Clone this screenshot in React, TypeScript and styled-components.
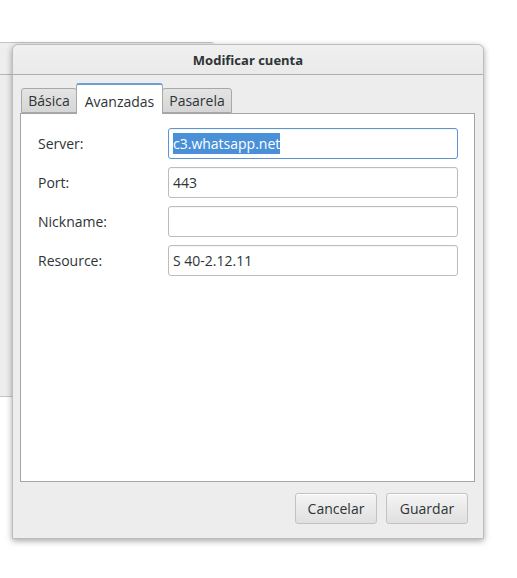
import React from "react";
import styled, { createGlobalStyle } from "styled-components";

const GlobalStyle = createGlobalStyle`
  html, body { margin: 0; padding: 0; background: #ffffff; }
  body { font-family: "Open Sans", "DejaVu Sans", sans-serif; font-size: 14px; color: #2e3436; }
  * { box-sizing: border-box; }
`;

const Desktop = styled.div`
  position: relative;
  width: 517px;
  height: 578px;
  overflow: hidden;
  background: #ffffff;
`;

const ParentWindow = styled.div`
  position: absolute;
  left: -4px;
  top: 42px;
  width: 220px;
  height: 355px;
  background: #ededed;
  border: 1px solid #c4c4c4;
  border-radius: 5px 5px 0 0;
  display: flex;
  flex-direction: column;
`;

const ParentTitle = styled.div`
  height: 32px;
  border-bottom: 1px solid #b6b6b6;
  background: #eeeeee;
`;

const Dialog = styled.div`
  position: absolute;
  left: 12px;
  top: 44px;
  width: 472px;
  height: 495px;
  background: #ededed;
  border: 1px solid #bdbdbd;
  border-radius: 6px 6px 0 0;
  box-shadow: 0 2px 6px rgba(0, 0, 0, 0.35);
  display: flex;
  flex-direction: column;
`;

const TitleBar = styled.div`
  height: 30px;
  flex: none;
  display: flex;
  align-items: center;
  justify-content: center;
  border-bottom: 1px solid #aeaeae;
  background: linear-gradient(#f0f0f0, #eaeaea);
  border-radius: 6px 6px 0 0;
  font-weight: 700;
  font-size: 13px;
  color: #2e3436;
`;

const Body = styled.div`
  flex: 1;
  display: flex;
  flex-direction: column;
  padding: 8px 8px 0 7px;
`;

const TabStrip = styled.div`
  display: flex;
  align-items: flex-end;
  padding-left: 1px;
  height: 30px;
  flex: none;
  position: relative;
  z-index: 1;
`;

const Tab = styled.div<{ $active?: boolean; $w: number }>`
  width: ${(p) => p.$w}px;
  height: ${(p) => (p.$active ? 31 : 25)}px;
  display: flex;
  align-items: center;
  justify-content: center;
  padding-top: ${(p) => (p.$active ? 3 : 0)}px;
  margin-bottom: ${(p) => (p.$active ? -1 : 0)}px;
  border: 1px solid #a8a8a8;
  border-bottom: ${(p) => (p.$active ? "none" : "1px solid #a8a8a8")};
  border-top: ${(p) => (p.$active ? "2px solid #6a9fd8" : "1px solid #a8a8a8")};
  border-radius: 3px 3px 0 0;
  background: ${(p) => (p.$active ? "#ffffff" : "linear-gradient(#e4e4e4, #d6d6d6)")};
  color: #2e3436;
  font-size: 14px;
  margin-left: ${(p) => (p.$active ? -1 : 0)}px;
  margin-right: ${(p) => (p.$active ? -1 : 0)}px;
  position: relative;
  z-index: ${(p) => (p.$active ? 2 : 1)};
`;

const Frame = styled.div`
  height: 369px;
  flex: none;
  background: #ffffff;
  border: 1px solid #a4a4a4;
  padding: 14px 16px 0 16px;
`;

const FormGrid = styled.div`
  display: grid;
  grid-template-columns: 131px 1fr;
  row-gap: 8px;
  align-items: center;
`;

const Label = styled.div`
  font-size: 14px;
  color: #2e3436;
  padding-left: 1px;
`;

const Entry = styled.div<{ $focused?: boolean }>`
  height: 31px;
  border: 1px solid ${(p) => (p.$focused ? "#5c93d0" : "#bcbcbc")};
  border-radius: 3px;
  background: #ffffff;
  display: flex;
  align-items: center;
  padding-left: 4px;
  font-size: 14px;
  color: #2e3436;
  box-shadow: inset 0 1px 1px rgba(0, 0, 0, 0.04);
`;

const Selected = styled.span`
  background: #4a90d9;
  color: #ffffff;
  padding: 1px 0;
`;

const ActionArea = styled.div`
  flex: 1;
  display: flex;
  justify-content: flex-end;
  align-items: flex-start;
  gap: 9px;
  padding: 11px 7px 0 0;
`;

const Button = styled.div`
  width: 82px;
  height: 31px;
  display: flex;
  align-items: center;
  justify-content: center;
  border: 1px solid #c2c2c2;
  border-radius: 3px;
  background: linear-gradient(#f4f4f4, #e0e0e0);
  box-shadow: inset 0 1px 0 #ffffff;
  font-size: 14px;
  color: #2e3436;
`;

export default function App() {
  const rows: { label: string; value: string; focused?: boolean }[] = [
    { label: "Server:", value: "c3.whatsapp.net", focused: true },
    { label: "Port:", value: "443" },
    { label: "Nickname:", value: "" },
    { label: "Resource:", value: "S 40-2.12.11" },
  ];
  return (
    <>
      <GlobalStyle />
      <Desktop>
        <ParentWindow>
          <ParentTitle />
        </ParentWindow>
        <Dialog>
          <TitleBar>Modificar cuenta</TitleBar>
          <Body>
            <TabStrip>
              <Tab $w={56}>Básica</Tab>
              <Tab $w={87} $active>
                Avanzadas
              </Tab>
              <Tab $w={70}>Pasarela</Tab>
            </TabStrip>
            <Frame>
              <FormGrid>
                {rows.map((r) => (
                  <React.Fragment key={r.label}>
                    <Label>{r.label}</Label>
                    <Entry $focused={r.focused}>
                      {r.focused ? <Selected>{r.value}</Selected> : r.value}
                    </Entry>
                  </React.Fragment>
                ))}
              </FormGrid>
            </Frame>
            <ActionArea>
              <Button>Cancelar</Button>
              <Button>Guardar</Button>
            </ActionArea>
          </Body>
        </Dialog>
      </Desktop>
    </>
  );
}
